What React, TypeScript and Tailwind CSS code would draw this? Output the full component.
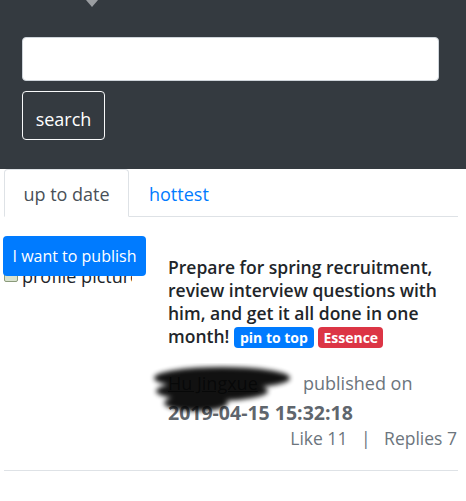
import React from "react";

const font = { fontFamily: '"Open Sans", "Liberation Sans", sans-serif' };

export default function App() {
  return (
    <div className="w-[466px] h-[501px] bg-white overflow-hidden relative text-[18px]" style={font}>
      {/* header */}
      <div className="bg-[#343a40] h-[169px] px-[22px] flex flex-col">
        <div className="h-0 relative">
          <div className="absolute left-[64px] top-0 w-0 h-0 border-l-[6px] border-r-[6px] border-t-[7px] border-l-transparent border-r-transparent border-t-[#9a9da1]" />
        </div>
        <input className="mt-[37px] h-[44px] w-[417px] bg-white rounded-[4px] border border-[#ced4da] outline-none" />
        <button className="mt-[10px] w-[83px] h-[49px] pt-[7px] rounded-[4px] border border-[#f8f9fa] text-white text-[18px] flex items-center justify-center">
          search
        </button>
      </div>

      {/* tabs */}
      <div className="ml-[4px] mr-[8px] flex border-b border-[#dee2e6] h-[48px]">
        <div className="w-[125px] h-[48px] pt-[3px] -mb-px bg-white border border-[#dee2e6] border-b-white rounded-t-[4px] flex items-center justify-center text-[#495057] text-[18px]">
          up to date
        </div>
        <div className="pl-[20px] pt-[3px] flex items-center text-[#007bff] text-[18px]">hottest</div>
      </div>

      {/* post */}
      <div className="relative">
        <button className="absolute left-[3px] top-[19px] w-[143px] h-[40px] bg-[#007bff] rounded-[4px] text-white text-[16px] z-10 flex items-center justify-center">
          I want to publish
        </button>
        <div className="ml-[4px] mr-[8px] flex pt-[39px] border-b border-[#dee2e6] h-[254px]">
          <div className="w-[164px] shrink-0 flex items-start">
            <div className="flex items-center mt-[9px] w-[128px] overflow-hidden whitespace-nowrap text-[#212529] leading-[22px]">
              <span className="w-[14px] h-[12px] mr-[4px] shrink-0 border border-[#8a9a7a] rounded-[2px] bg-[#d9e3cf]" />
              <span>profile picture</span>
            </div>
          </div>
          <div className="flex-1">
            <div className="text-[17.5px] font-semibold leading-[23px] text-[#212529] pr-[4px]">
              Prepare for spring recruitment, review interview questions with him, and get it all done in one month!{" "}
              <span className="inline-block align-middle bg-[#007bff] text-white text-[14px] font-bold leading-[15px] px-[6px] py-[3px] rounded-[4px] relative -top-[1px]">pin to top</span>{" "}
              <span className="inline-block align-middle bg-[#dc3545] text-white text-[14px] font-bold leading-[15px] px-[5px] py-[3px] rounded-[4px] relative -top-[1px]">Essence</span>
            </div>
            <div className="relative mt-[20px] text-[#6c757d] text-[18px] leading-[29px]">
              <div className="flex">
                <span className="underline text-[#6c757d] w-[113px] whitespace-nowrap overflow-hidden">Hu Jingxue</span>
                <span className="ml-[22px]">published on</span>
              </div>
              <div className="font-bold text-[#5f666d] text-[19.5px] leading-[29px]">2019-04-15 15:32:18</div>
              <svg className="absolute left-[-22px] top-[-6px]" width="156" height="56" viewBox="0 0 156 56">
                <defs>
                  <filter id="b" x="-20%" y="-40%" width="140%" height="180%">
                    <feGaussianBlur stdDeviation="2.6" />
                  </filter>
                </defs>
                <g filter="url(#b)" fill="#000" opacity="0.93">
                  <ellipse cx="76" cy="15" rx="68" ry="11" />
                  <ellipse cx="66" cy="28" rx="56" ry="10" />
                  <ellipse cx="50" cy="40" rx="32" ry="8" />
                </g>
              </svg>
              <div className="text-right pr-[1px] -mt-[3px] text-[17.5px] leading-[28px]">
                Like 11 <span className="mx-[9px]">|</span> Replies 7
              </div>
            </div>
          </div>
        </div>
      </div>
    </div>
  );
}
